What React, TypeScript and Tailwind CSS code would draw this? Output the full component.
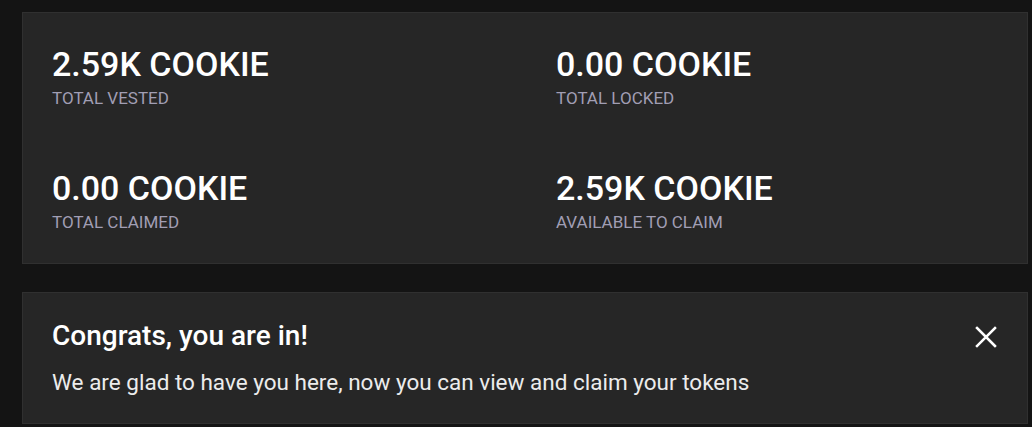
const stats = [
  { value: "2.59K COOKIE", label: "TOTAL VESTED" },
  { value: "0.00 COOKIE", label: "TOTAL LOCKED" },
  { value: "0.00 COOKIE", label: "TOTAL CLAIMED" },
  { value: "2.59K COOKIE", label: "AVAILABLE TO CLAIM" },
];

function Stat({ value, label }: { value: string; label: string }) {
  return (
    <div className="flex flex-col gap-[4px]">
      <p className="text-[34px] leading-[40px] font-medium text-white">{value}</p>
      <p className="text-[17px] leading-[20px] text-[#a19eb4]">{label}</p>
    </div>
  );
}

export default function App() {
  return (
    <div
      className="h-[427px] w-[1032px] overflow-hidden bg-[#141414] pt-[12px] pl-[22px]"
      style={{ fontFamily: "Roboto, 'Noto Sans', sans-serif" }}
    >
      <div className="w-[1006px] border border-[#303030] bg-[#262626] px-[29px] py-[31px]">
        <div className="grid grid-cols-[504px_1fr] gap-y-[60px]">
          {stats.map((s, i) => (
            <Stat key={i} value={s.value} label={s.label} />
          ))}
        </div>
      </div>

      <div className="mt-[28px] flex w-[1006px] items-start justify-between border border-[#303030] bg-[#262626] pt-[26px] pb-[26px] pl-[29px] pr-[30px]">
        <div className="flex flex-col gap-[14px]">
          <h2 className="text-[28px] leading-[34px] font-medium text-white">Congrats, you are in!</h2>
          <p className="text-[22.5px] leading-[30px] text-[#ececec]">
            We are glad to have you here, now you can view and claim your tokens
          </p>
        </div>
        <button className="mt-[7px] text-white">
          <svg width="22" height="22" viewBox="0 0 22 22" fill="none" stroke="currentColor" strokeWidth="2.5" strokeLinecap="square">
            <path d="M2 2 L20 20 M20 2 L2 20" />
          </svg>
        </button>
      </div>
    </div>
  );
}
